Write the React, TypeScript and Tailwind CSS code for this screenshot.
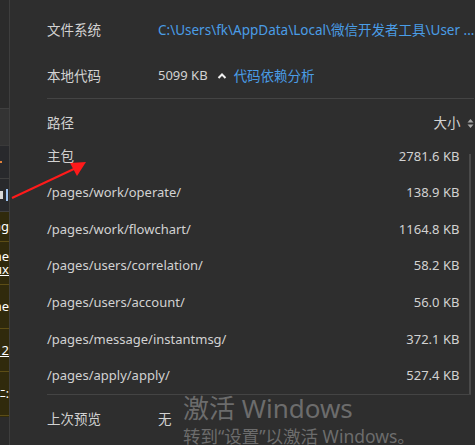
import React from "react";

const rows = [
  { path: "主包", size: "2781.6 KB" },
  { path: "/pages/work/operate/", size: "138.9 KB" },
  { path: "/pages/work/flowchart/", size: "1164.8 KB" },
  { path: "/pages/users/correlation/", size: "58.2 KB" },
  { path: "/pages/users/account/", size: "56.0 KB" },
  { path: "/pages/message/instantmsg/", size: "372.1 KB" },
  { path: "/pages/apply/apply/", size: "527.4 KB" },
];

const SideStrip = () => (
  <div className="w-[10px] shrink-0 flex flex-col border-r border-[#3e3e3e] text-[13px] text-white leading-none">
    <div className="h-[108px] bg-[#2b2b2b]" />
    <div className="h-[37px] bg-[#333333] border-t border-[#3f3f3f]" />
    <div className="h-[33px] bg-[#28292c] border-t border-[#3a3a3a] flex items-center">
      <div className="w-[2px] h-[2px] bg-[#e0803a]" />
    </div>
    <div className="h-[34px] bg-[#28292c] border-t border-[#3f3f3f] border-b flex items-center overflow-hidden">
      <div className="w-[3px] h-[8px] bg-[#d8d8d8]" />
      <div className="ml-[3px] w-[2px] h-[12px] bg-[#9ec2ef]" />
    </div>
    <div className="h-[205px] bg-[#302a0c] flex flex-col overflow-hidden">
      <div className="h-[30px] flex items-center justify-end whitespace-nowrap border-b border-[#5c4d16]">ng</div>
      <div className="h-[43px] flex flex-col justify-center items-end whitespace-nowrap border-b border-[#5c4d16]">
        <span>ne</span>
        <span className="underline">ux</span>
      </div>
      <div className="h-[44px] flex items-center justify-end whitespace-nowrap border-b border-[#5c4d16]">ne</div>
      <div className="h-[43px] flex items-center justify-end whitespace-nowrap border-b border-[#5c4d16] underline">12</div>
      <div className="h-[44px] flex items-center justify-end whitespace-nowrap border-b border-[#5c4d16] text-[12px]">ﾆ:</div>
    </div>
    <div className="flex-1 bg-[#2b2b2b]" />
  </div>
);

export default function App() {
  return (
    <div
      className="relative w-[475px] h-[445px] overflow-hidden flex bg-[#2e2e2e] text-[#d2d2d2] text-[13.5px]"
      style={{ fontFamily: '"Noto Sans", "Noto Sans CJK SC", sans-serif' }}
    >
      <SideStrip />

      <div className="flex-1 flex flex-col pl-[37px] pr-[5px] pt-[6px]">
        <div className="h-[48px] flex items-center">
          <span className="w-[111px] shrink-0">文件系统</span>
          <span className="text-[#4a9de6] whitespace-nowrap">C:\Users\fk\AppData\Local\微信开发者工具\User ...</span>
        </div>
        <div className="h-[45px] flex items-center border-b border-[#444444]">
          <span className="w-[111px] shrink-0">本地代码</span>
          <span className="text-[13px]">5099 KB</span>
          <svg width="10" height="8" viewBox="0 0 10 8" className="ml-[9px] mr-[7px]">
            <polyline points="1.5,6 5,2.5 8.5,6" fill="none" stroke="#f0f0f0" strokeWidth="2" />
          </svg>
          <span className="text-[#4a9de6]">代码依赖分析</span>
        </div>

        <div className="h-[39px] pt-[9px] flex items-center justify-between">
          <span>路径</span>
          <span className="flex items-center gap-[7px]">
            大小
            <svg width="7" height="11" viewBox="0 0 7 11">
              <polygon points="3.5,1 6.5,4.5 0.5,4.5" fill="#a8a8a8" />
              <polygon points="3.5,10 6.5,6.5 0.5,6.5" fill="#a8a8a8" />
            </svg>
          </span>
        </div>

        <div className="relative flex flex-col border-b border-[#444444] mr-[3px] text-[13px]">
          {rows.map((r, i) => (
            <div key={i} className="h-[36.6px] flex items-center justify-between pr-[12px]">
              <span className={i === 0 ? "text-[13.5px]" : ""}>{r.path}</span>
              <span>{r.size}</span>
            </div>
          ))}
          <div className="absolute right-0 top-[16px] bottom-0 w-[2px] bg-[#4a4a4a]" />
        </div>

        <div className="flex-1 flex items-center pb-[2px]">
          <span className="w-[111px] shrink-0">上次预览</span>
          <span>无</span>
        </div>
      </div>

      <div className="absolute left-[183px] top-[395px] text-[#6c6c6c] leading-none pointer-events-none whitespace-nowrap">
        <div className="text-[26px]">激活 Windows</div>
        <div className="text-[17.5px] mt-[7px]">转到“设置”以激活 Windows。</div>
      </div>

      <svg className="absolute left-0 top-0 pointer-events-none" width="475" height="445">
        <line x1="12" y1="198" x2="76" y2="168" stroke="#ff1a1a" strokeWidth="2" />
        <polygon points="86,162 70,163 77,176" fill="#ff1a1a" />
      </svg>
    </div>
  );
}
